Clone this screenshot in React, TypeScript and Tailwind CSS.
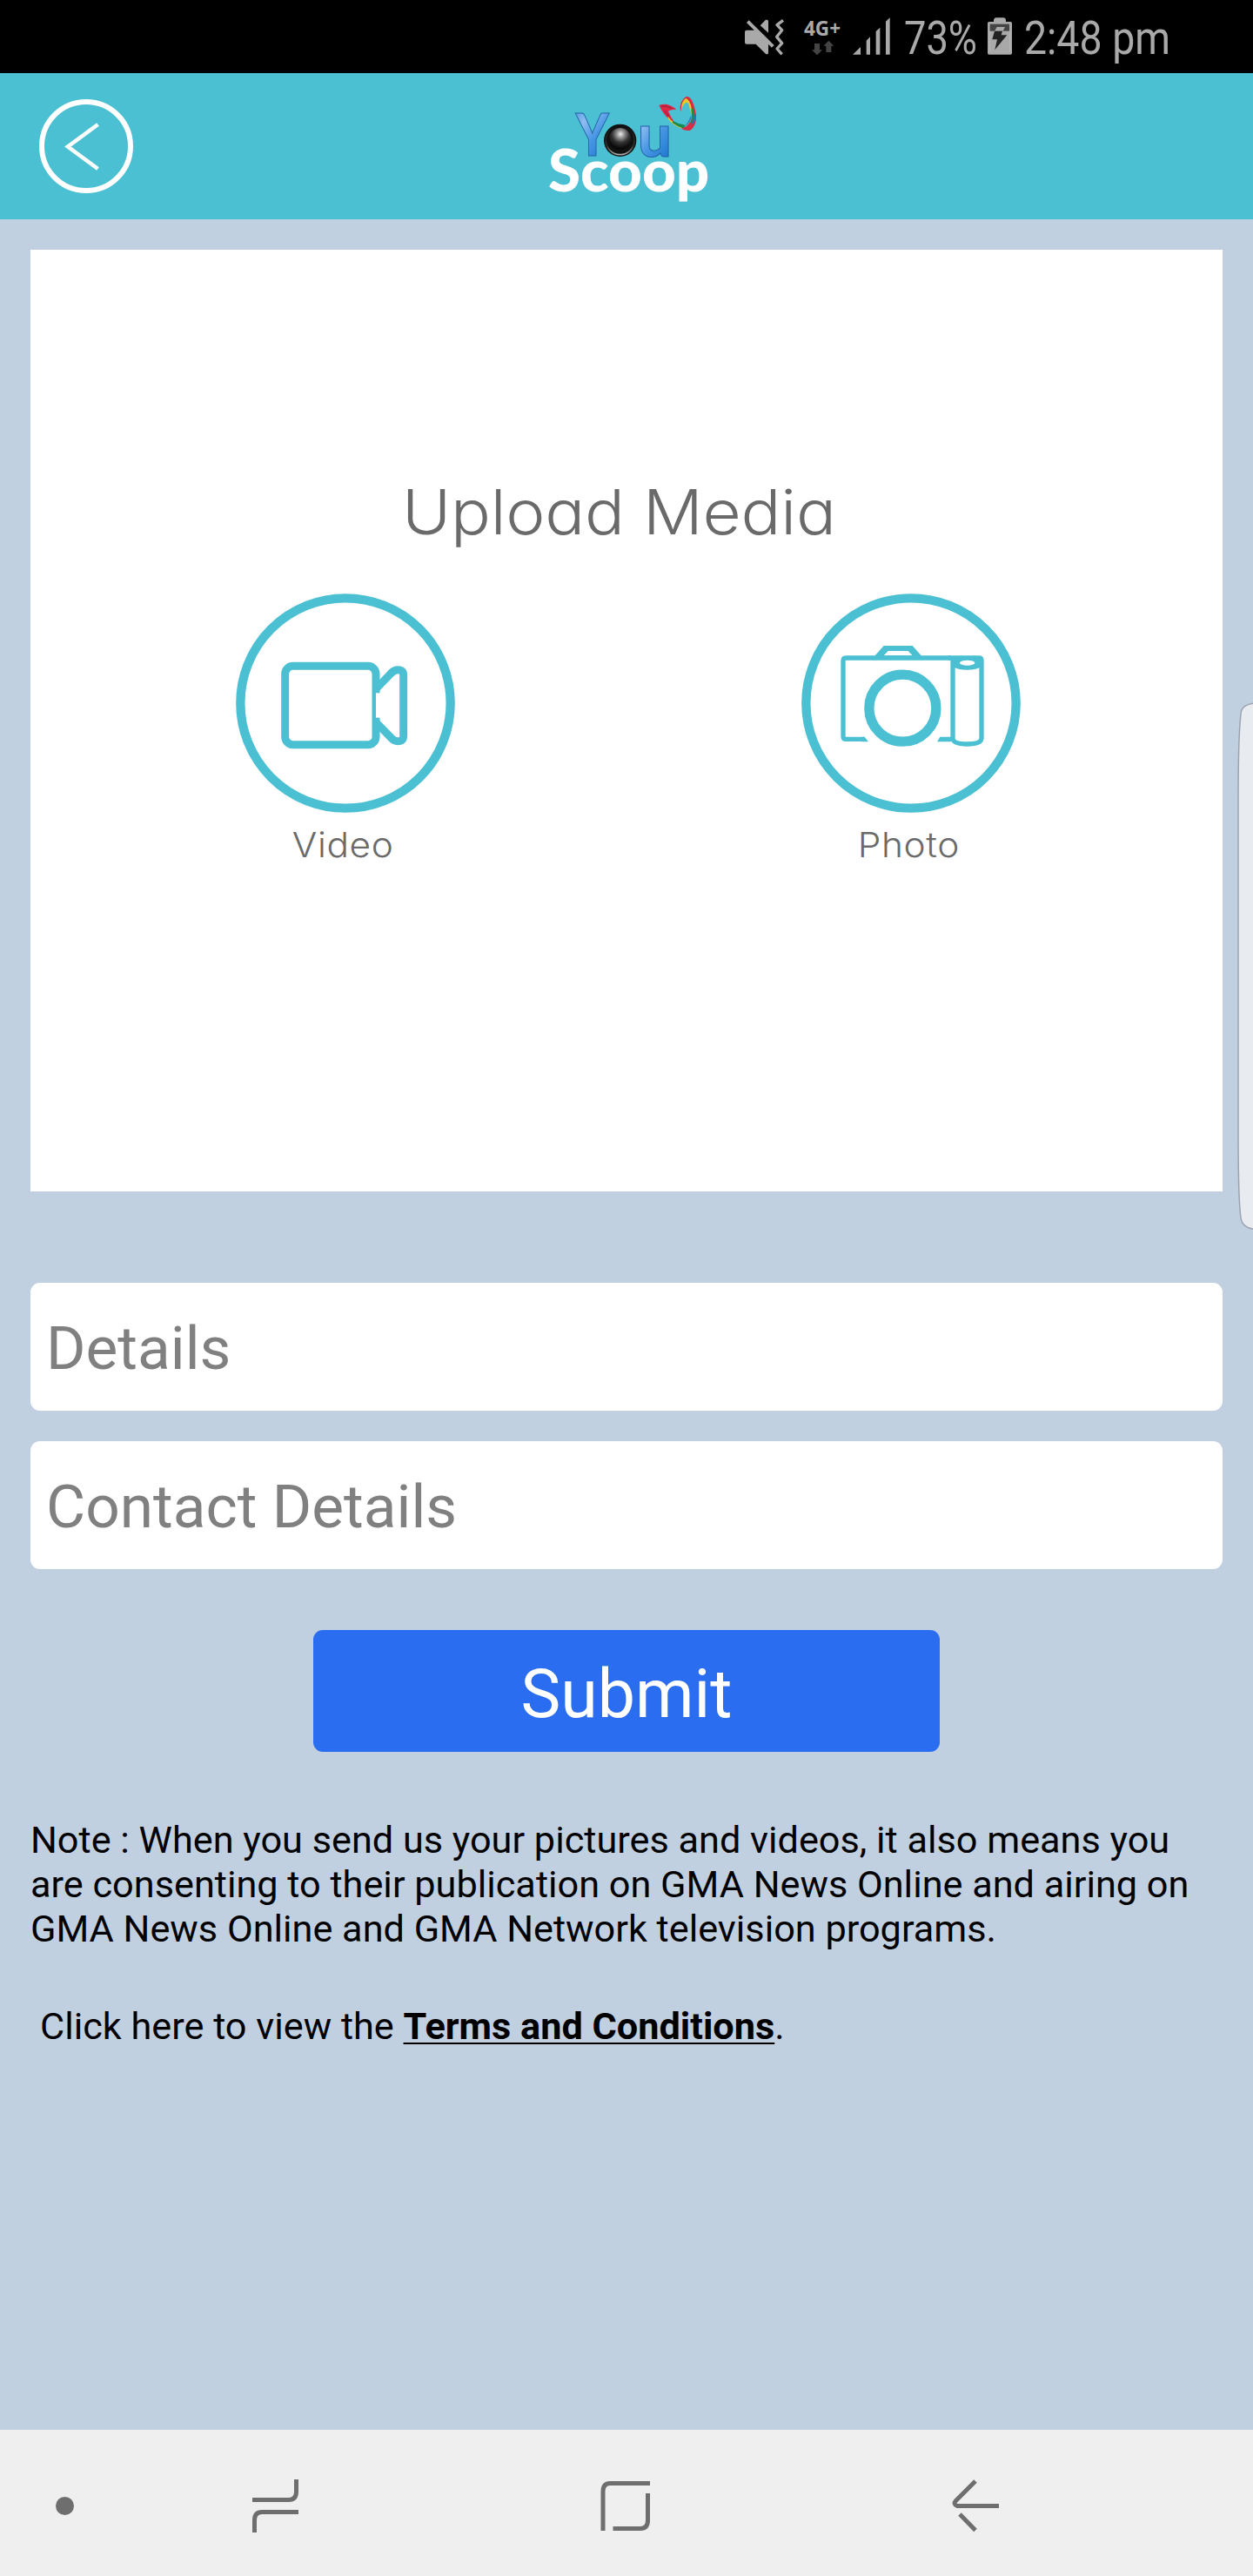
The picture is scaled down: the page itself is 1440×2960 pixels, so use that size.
import React from 'react';

function StatusBar() {
  return (
    <div className="flex h-[84px] w-full bg-black pl-[855px] font-[Roboto,sans-serif] text-[#a9a9a9]">
      <svg className="h-[84px] w-[50px] shrink-0" viewBox="45 0 150 252" fill="#a9a9a9">
        <path d="M54 104H85L129 148V182Q129 187 124 187H121L86 152H54Q48 152 48 146V110Q48 104 54 104Z" />
        <path d="M101 88L120 68H124Q129 68 129 73V113Z" />
        <path d="M58 74L145 160" stroke="#a9a9a9" strokeWidth="12" />
        <path d="M180 70L159 86L176 104L158 127L176 149L159 168L176 187" fill="none" stroke="#a9a9a9" strokeWidth="10" strokeLinejoin="round" />
      </svg>
      <div className="ml-[19px] flex w-[55px] shrink-0 flex-col pt-[20px]">
        <span className="font-['Open_Sans'] text-[22.5px] leading-[26px] font-bold">4G+</span>
        <svg className="ml-[8px] h-[20px] w-[30px]" viewBox="276 138 90 60" fill="#444">
          <path d="M288 150H306V172H315L297 190L279 172H288Z" />
          <path d="M328 180H346V158H355L337 140L319 158H328Z" />
        </svg>
      </div>
      <svg className="h-[84px] w-[45px] shrink-0" viewBox="414 0 135 252" fill="#a9a9a9">
        <path d="M417 188L444 162V188ZM464 188V140L477 127V188ZM497 188V108L511 95V188ZM531 188V74L545 61V188Z" />
      </svg>
      <svg className="ml-[15px] h-[84px] w-[84px] shrink-0 overflow-visible" viewBox="0 0 84 84">
        <text x="0" y="62" fontSize="53" textLength="84" lengthAdjust="spacingAndGlyphs" fill="#a9a9a9">73%</text>
      </svg>
      <svg className="ml-[11px] h-[84px] w-[30px] shrink-0" viewBox="882 0 90 252" fill="#a9a9a9">
        <path d="M885 80Q885 75 890 75H906V68Q908 61 915 61H940Q946 61 948 68V75H964Q969 75 969 80V183Q969 188 964 188H890Q885 188 885 183Z" />
        <path d="M893 83H960V107H893Z" fill="#444" />
        <path d="M917 93H945L938 107H909Z" />
        <path d="M909 107H936L932 121H952L910 172L918 136H901Z" fill="#222" />
        <path d="M892 107V178M962 107V178" stroke="#c0c0c0" strokeWidth="2" />
      </svg>
      <svg className="ml-[13px] h-[84px] w-[170px] shrink-0 overflow-visible" viewBox="0 0 170 84">
        <text x="0" y="62" fontSize="53" textLength="168" lengthAdjust="spacingAndGlyphs" fill="#a9a9a9">2:48 pm</text>
      </svg>
    </div>
  );
}

function Logo() {
  return (
    <svg className="h-[150px] w-[220px]" viewBox="0 0 660 450" fontFamily="Lato, sans-serif">
      <defs>
        <linearGradient id="blue" x1="0" y1="0" x2="0.6" y2="1">
          <stop offset="0" stopColor="#3585d4" />
          <stop offset="0.35" stopColor="#8dbdf0" />
          <stop offset="0.65" stopColor="#4796e4" />
          <stop offset="1" stopColor="#2079cf" />
        </linearGradient>
        <radialGradient id="lens" cx="0.52" cy="0.28" r="0.65">
          <stop offset="0" stopColor="#eee" />
          <stop offset="0.25" stopColor="#999" />
          <stop offset="0.6" stopColor="#333" />
          <stop offset="1" stopColor="#080808" />
        </radialGradient>
        <linearGradient id="ring" x1="0" y1="0" x2="0" y2="1">
          <stop offset="0" stopColor="#111" />
          <stop offset="0.7" stopColor="#333" />
          <stop offset="1" stopColor="#aaa" />
        </linearGradient>
      </defs>
      <g fill="url(#blue)" stroke="#2463a8" strokeWidth="3" fontWeight="900">
        <text x="155" y="252" fontSize="198" textLength="114" lengthAdjust="spacingAndGlyphs">Y</text>
        <text x="369" y="254" fontSize="206" textLength="117" lengthAdjust="spacingAndGlyphs">u</text>
      </g>
      <circle cx="308" cy="199" r="56" fill="#111" />
      <circle cx="308" cy="199" r="49" fill="none" stroke="url(#ring)" strokeWidth="5" />
      <circle cx="308" cy="194" r="38" fill="url(#lens)" />
      <path d="M442 78Q470 66 502 92Q482 92 474 98Q482 118 496 138Q462 122 442 78Z" fill="#df2647" />
      <path d="M449 82Q470 78 486 89M462 97L476 116" fill="none" stroke="#a7223c" strokeWidth="4" />
      <path d="M474 118Q488 140 528 152L522 158Q486 146 472 122Z" fill="#e8c32c" />
      <path d="M490 132Q512 144 532 146L528 158Q506 152 488 138Z" fill="#158b52" />
      <path d="M516 100Q510 66 534 49Q558 42 570 112Q572 150 550 164Q536 168 518 158Q540 154 553 130Q562 104 544 66Q528 56 516 100Z" fill="#d92b43" />
      <path d="M535 54Q551 62 555 92L556 112Q548 96 544 72Q532 58 518 94Q520 62 535 54Z" fill="#edca25" />
      <path d="M555 82Q566 102 563 122L550 144Q559 116 553 96Z" fill="#16914f" />
      <path d="M563 103Q572 124 562 140L553 144Q564 124 563 103Z" fill="#2274b8" />
      <path d="M554 116Q552 138 528 152Q544 138 550 118Z" fill="#3178c0" />
      <text x="60" y="374" fontSize="201" fontWeight="900" fill="#fff" textLength="556" lengthAdjust="spacingAndGlyphs">Scoop</text>
    </svg>
  );
}

function Header() {
  return (
    <header className="flex h-[168px] w-full items-start bg-[#4bc0d3]">
      <button className="mt-[30px] ml-[45px] h-[108px] w-[108px] shrink-0">
        <svg className="h-[108px] w-[108px]" viewBox="0 0 108 108" fill="none" stroke="#fff">
          <circle cx="54" cy="54" r="51" strokeWidth="6" />
          <path d="M67.5 29L33 54.5L67.5 80" strokeWidth="4.6" />
        </svg>
      </button>
      <div className="mt-[11px] ml-[457px]">
        <Logo />
      </div>
    </header>
  );
}

function VideoIcon() {
  return (
    <svg className="h-[252px] w-[252px]" viewBox="63 66 756 756" fill="none" stroke="#4bc0d3">
      <circle cx="441" cy="444" r="362" strokeWidth="31" />
      <rect x="233" y="316" width="313" height="271" rx="27" strokeWidth="27" />
      <path d="M548 393L597 342Q608 329 622 329Q641 329 641 347V557Q641 575 622 575Q608 575 597 562L548 512" strokeWidth="27" />
      <path d="M546 409V494H562V409Z" fill="#fff" stroke="none" />
    </svg>
  );
}

function PhotoIcon() {
  return (
    <svg className="h-[252px] w-[252px]" viewBox="63 66 756 756" fill="none" stroke="#4bc0d3">
      <circle cx="441" cy="444" r="362" strokeWidth="31" />
      <circle cx="412" cy="461" r="115.500" strokeWidth="34" />
      <path d="M578 288H216Q207 288 207 298V558Q207 568 216 568H280" strokeWidth="16" />
      <path d="M272 560H281L294 577H272ZM541 560H580V577H531Z" fill="#4bc0d3" stroke="none" />
      <path d="M315 282L347 246H446L478 282ZM347 280H446L431 264H362Z" fill="#4bc0d3" fillRule="evenodd" stroke="none" />
      <path d="M570 288H678Q684 289 684 298V565Q684 585 635 585Q585 585 585 565V290" strokeWidth="16" />
      <path d="M585 288H684V317Q668 329 635 329Q600 329 585 317Z" fill="#4bc0d3" stroke="none" />
      <ellipse cx="635" cy="305" rx="26" ry="9" fill="#fff" stroke="none" />
    </svg>
  );
}

function MediaCard() {
  return (
    <section className="mx-[35px] mt-[35px] flex h-[1082px] flex-col bg-white pt-[257px] font-[Inter,sans-serif] text-[#6a6a6a]">
      <h1 className="ml-[427px] w-[480px] origin-left scale-x-[1.075] text-[71px] leading-[88px] font-[360] tracking-[-0.2px] whitespace-nowrap [font-feature-settings:'cv11']">
        Upload Media
      </h1>
      <div className="mt-[50px] flex pl-[236px]">
        <div className="flex w-[252px] flex-col items-center">
          <VideoIcon />
          <span className="mt-[12px] mr-[5px] scale-x-[1.06] text-[40px] leading-[50px] font-light tracking-[0.6px]">Video</span>
        </div>
        <div className="ml-[398px] flex w-[252px] flex-col items-center">
          <PhotoIcon />
          <span className="mt-[12px] mr-[5px] scale-x-[1.06] text-[40px] leading-[50px] font-light tracking-[0.6px]">Photo</span>
        </div>
      </div>
    </section>
  );
}

function Form() {
  const field =
    'h-[147px] w-full rounded-[11px] bg-white px-[18px] pt-[3px] text-[69.4px] text-[#808080] placeholder:text-[#808080] placeholder:opacity-100 outline-none';
  return (
    <form className="mx-[35px] mt-[105px] flex flex-col">
      <input className={field} placeholder="Details" />
      <input className={field + ' mt-[35px]'} placeholder="Contact Details" />
      <button type="button" className="mt-[70px] h-[140px] w-[720px] self-center rounded-[11px] bg-[#2a6df0] pt-[7px] text-[77px] leading-[90px] text-white">
        Submit
      </button>
    </form>
  );
}

function NavBar() {
  return (
    <nav className="mt-auto flex h-[168px] items-center bg-[#efefef] pt-[6px]">
      <span className="ml-[64px] h-[21px] w-[21px] rounded-full bg-[#6e6e6e]" />
      <svg className="ml-[202px] h-[66px] w-[60px]" viewBox="287 2846 60 66" fill="none" stroke="#6e6e6e" strokeWidth="5">
        <path d="M290 2872.500H332Q340.500 2872.500 340.500 2863V2849M343 2886.500H301Q292.500 2886.500 292.500 2896V2910" />
      </svg>
      <svg className="ml-[340px] h-[66px] w-[64px]" viewBox="687 2846 64 66" fill="none" stroke="#6e6e6e" strokeWidth="5">
        <path d="M747 2853.500H701Q693 2853.500 693 2863V2908M744.500 2865V2896Q744.500 2905.500 736 2905.500H704.500" />
      </svg>
      <svg className="ml-[340px] h-[66px] w-[60px]" viewBox="1091 2846 60 66" fill="none" stroke="#6e6e6e" strokeWidth="5">
        <path d="M1121 2851L1098.500 2873.500Q1095 2877.500 1100 2879.500H1148M1103 2889L1121 2907.500" />
      </svg>
    </nav>
  );
}

export default function App() {
  return (
    <div className="relative flex h-[2960px] w-[1440px] flex-col overflow-hidden bg-[#c1d0e1] font-[Roboto,sans-serif]">
      <StatusBar />
      <Header />
      <MediaCard />
      <Form />
      <div className="mt-[76px] pl-[35px] text-[43.25px] leading-[51px] whitespace-nowrap text-black">
        <p>
          Note : When you send us your pictures and videos, it also means you
          <br />
          are consenting to their publication on GMA News Online and airing on
          <br />
          GMA News Online and GMA Network television programs.
        </p>
        <p className="mt-[61px] pl-[11px]">
          Click here to view the{' '}
          <a className="font-bold underline decoration-[2px] underline-offset-[4px] [text-decoration-skip-ink:none]">Terms and Conditions</a>.
        </p>
      </div>
      <NavBar />
      <svg className="absolute top-[804px] right-0 h-[612px] w-[20px]" viewBox="1420 804 20 612">
        <path d="M1442 808Q1429 809 1426.500 817Q1423 840 1423 920V1300Q1423 1385 1426.500 1402Q1429 1411 1442 1412.500Z" fill="#e8ebf0" stroke="#9ba4ae" strokeWidth="1.500" />
      </svg>
    </div>
  );
}
